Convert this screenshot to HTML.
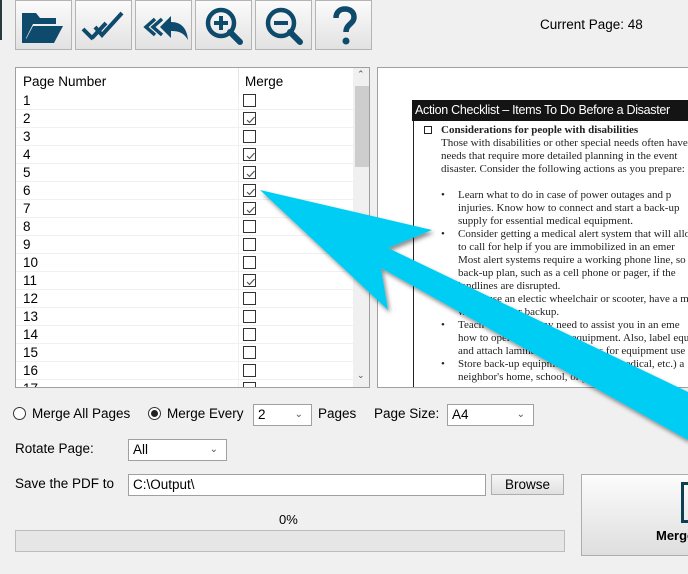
<!DOCTYPE html>
<html><head><meta charset="utf-8">
<style>
*{box-sizing:border-box;margin:0;padding:0}
body{width:688px;height:574px;overflow:hidden;background:#f0f0f0;font-family:"Liberation Sans",sans-serif;font-size:13px;color:#000;position:relative}
.a{position:absolute}
.tb{position:absolute;top:0;width:57px;height:50px;border:1px solid #b4b4b4;background:linear-gradient(#fbfbfb,#e2e2e2)}
.tb svg{position:absolute;left:0;top:0}
.list{left:15px;top:67px;width:355px;height:321px;border:1px solid #a0a0a0;background:#fff;overflow:hidden}
.row{position:absolute;left:0;width:337px;height:18px;border-bottom:1px solid #f0f0f0}
.row span{position:absolute;left:7px;top:1px;font-size:13.5px}
.cb{position:absolute;left:227px;top:2px;width:13px;height:13px;border:1px solid #333;background:#fff}
.cb svg{position:absolute;left:1px;top:1px}
.dd{position:absolute;background:#fff;border:1px solid #a0a0a0;height:22px;font-size:13.5px;padding:2px 4px}
.dd i{position:absolute;right:8px;top:4px;font-style:normal;color:#555;font-size:10px}
.doc{font-family:"Liberation Serif",serif;font-size:11px;line-height:13px;color:#222;position:absolute;white-space:nowrap}
.doc p{position:relative;padding-left:17px;margin:0}
.doc p b.bl{position:absolute;left:0;font-weight:normal}
</style></head><body>
<div class="a" style="left:0;top:0;width:2px;height:40px;background:#2a3a40"></div>
<div class="tb" style="left:15px"><svg width="57" height="50"><path d="M8 12h12l4 5h16v6H17l-9 18z" fill="#0d4a6b"/><path d="M8 42l9-17h30l-9 17z" fill="#0d4a6b"/><path d="M8 12v30" stroke="#0d4a6b" stroke-width="4"/></svg></div>
<div class="tb" style="left:75px"><svg width="57" height="50"><path d="M7 28l10 10M16 37l14-15M19 26l7 8 20-22" stroke="#0d4a6b" stroke-width="4" fill="none"/></svg></div>
<div class="tb" style="left:135px"><svg width="57" height="50"><path d="M19 18l-9 8 9 8M26 18l-9 8 9 8" stroke="#0d4a6b" stroke-width="3.5" fill="none"/><path d="M24 26l11-11v6c10 0 16 6 17 18-4-7-9-9-17-9v7z" fill="#0d4a6b"/></svg></div>
<div class="tb" style="left:195px"><svg width="57" height="50"><circle cx="25" cy="22" r="13" stroke="#0d4a6b" stroke-width="4.5" fill="none"/><path d="M34 31l10 10" stroke="#0d4a6b" stroke-width="6" stroke-linecap="round"/><path d="M18 22h14M25 15v14" stroke="#0d4a6b" stroke-width="4"/></svg></div>
<div class="tb" style="left:255px"><svg width="57" height="50"><circle cx="25" cy="22" r="13" stroke="#0d4a6b" stroke-width="4.5" fill="none"/><path d="M34 31l10 10" stroke="#0d4a6b" stroke-width="6" stroke-linecap="round"/><path d="M18 22h14" stroke="#0d4a6b" stroke-width="4"/></svg></div>
<div class="tb" style="left:315px"><svg width="57" height="50"><path d="M20 17c0-6 4-9 9-9s9 3 9 8c0 7-8 7-8 15" stroke="#0d4a6b" stroke-width="5.5" fill="none"/><circle cx="30" cy="40" r="3.5" fill="#0d4a6b"/></svg></div>
<div class="a" style="left:540px;top:17px;font-size:13.5px">Current Page: 48</div>
<div class="a list">
<div class="a" style="left:0;top:0;width:337px;height:24px;background:#fff"><span class="a" style="left:7px;top:6px;font-size:13.5px">Page Number</span><span class="a" style="left:229px;top:6px;font-size:13.5px">Merge</span><div class="a" style="left:222px;top:0;width:1px;height:24px;background:#e5e5e5"></div></div>
<div class="a" style="left:222px;top:24px;width:1px;height:300px;background:#f0f0f0"></div>
<div class="a" style="left:337px;top:0;width:17px;height:320px;background:#f0f0f0"><div class="a" style="left:2px;top:18px;width:14px;height:81px;background:#cdcdcd"></div><div class="a" style="left:4px;top:1px;font-size:9px;color:#555">&#8963;</div><div class="a" style="left:4px;top:302px;font-size:9px;color:#555">&#8964;</div></div>
<div id="rows"></div>
</div>
<div class="a" style="left:377px;top:67px;width:311px;height:321px;border:1px solid #a0a0a0;border-right:none;background:#fff;overflow:hidden">
<div class="a" style="left:34px;top:32px;width:280px;height:21px;background:#141414;color:#fff;font-family:'Liberation Sans Narrow','Liberation Sans',sans-serif;font-size:12.5px;padding:3px 3px;letter-spacing:-0.3px">Action Checklist – Items To Do Before a Disaster</div>
<div class="a" style="left:35px;top:53px;width:1px;height:270px;background:#222"></div>
<div class="a" style="left:46px;top:58px;width:8px;height:8px;border:1.5px solid #222"></div>
<div class="doc" style="left:63px;top:56px"><b>Considerations for people with disabilities</b><br>Those with disabilities or other special needs often have<br>needs that require more detailed planning in the event<br>disaster. Consider the following actions as you prepare:</div>
<div class="doc" style="left:63px;top:121px">
<p><b class="bl">•</b>Learn what to do in case of power outages and p<br>injuries. Know how to connect and start a back-up<br>supply for essential medical equipment.</p>
<p><b class="bl">•</b>Consider getting a medical alert system that will allo<br>to call for help if you are immobilized in an emer<br>Most alert systems require a working phone line, so<br>back-up plan, such as a cell phone or pager, if the<br>landlines are disrupted.</p>
<p><b class="bl">•</b>If you use an electic wheelchair or scooter, have a m<br>wheelchair for backup.</p>
<p><b class="bl">•</b>Teach those who may need to assist you in an eme<br>how to operate necessary equipment. Also, label equ<br>and attach laminated instructions for equipment use</p>
<p><b class="bl">•</b>Store back-up equipment (mobility, medical, etc.) a<br>neighbor's home, school, or your workplace.</p>
</div>
</div>
<div class="a" style="left:13px;top:407px;width:13px;height:13px;border:1px solid #333;border-radius:50%;background:#fff"></div>
<div class="a" style="left:32px;top:406px;font-size:13.5px">Merge All Pages</div>
<div class="a" style="left:148px;top:407px;width:13px;height:13px;border:1px solid #333;border-radius:50%;background:#fff"><div class="a" style="left:2px;top:2px;width:7px;height:7px;border-radius:50%;background:#222"></div></div>
<div class="a" style="left:167px;top:406px;font-size:13.5px">Merge Every</div>
<div class="dd" style="left:253px;top:404px;width:59px">2<i>&#8964;</i></div>
<div class="a" style="left:318px;top:406px;font-size:13.5px">Pages</div>
<div class="a" style="left:374px;top:406px;font-size:13.5px">Page Size:</div>
<div class="dd" style="left:447px;top:404px;width:87px">A4<i>&#8964;</i></div>
<div class="a" style="left:15px;top:441px;font-size:13.5px">Rotate Page:</div>
<div class="dd" style="left:128px;top:439px;width:99px">All<i>&#8964;</i></div>
<div class="a" style="left:15px;top:476px;font-size:13.5px">Save the PDF to</div>
<div class="dd" style="left:128px;top:474px;width:358px">C:\Output\</div>
<div class="a" style="left:491px;top:474px;width:73px;height:21px;border:1px solid #adadad;background:linear-gradient(#f6f6f6,#e0e0e0);text-align:center;font-size:13.5px;padding-top:2px">Browse</div>
<div class="a" style="left:279px;top:512px;font-size:13px">0%</div>
<div class="a" style="left:15px;top:530px;width:550px;height:22px;border:1px solid #bcbcbc;background:#e6e6e6"></div>
<div class="a" style="left:581px;top:474px;width:110px;height:82px;border:1px solid #adadad;background:linear-gradient(#fcfcfc,#dedede)">
<div class="a" style="left:99px;top:7px;width:10px;height:41px;border:3px solid #0d3f55;border-right:none"></div>
<div class="a" style="left:74px;top:53px;font-weight:bold;font-size:13px">Merge</div></div>
<svg class="a" style="left:0;top:0" width="688" height="574"><defs><filter id="s" x="-10%" y="-10%" width="130%" height="130%"><feDropShadow dx="2" dy="3" stdDeviation="2" flood-color="#000" flood-opacity="0.45"/></filter></defs>
<polygon filter="url(#s)" fill="#00cdf3" points="260,190 432,230 388,248 688,392 688,440 381,268 388,310"/></svg>
<script>
var c=[0,1,0,1,1,1,1,0,0,0,1,0,0,0,0,0,0],h='';
for(var i=0;i<17;i++){h+='<div class="row" style="top:'+(24+i*18)+'px"><span>'+(i+1)+'</span><div class="cb">'+(c[i]?'<svg width="11" height="11"><path d="M2 6l2.5 2.5L9.5 3" stroke="#555" stroke-width="1.2" fill="none"/></svg>':'')+'</div></div>';}
document.getElementById('rows').innerHTML=h;
</script>
</body></html>
